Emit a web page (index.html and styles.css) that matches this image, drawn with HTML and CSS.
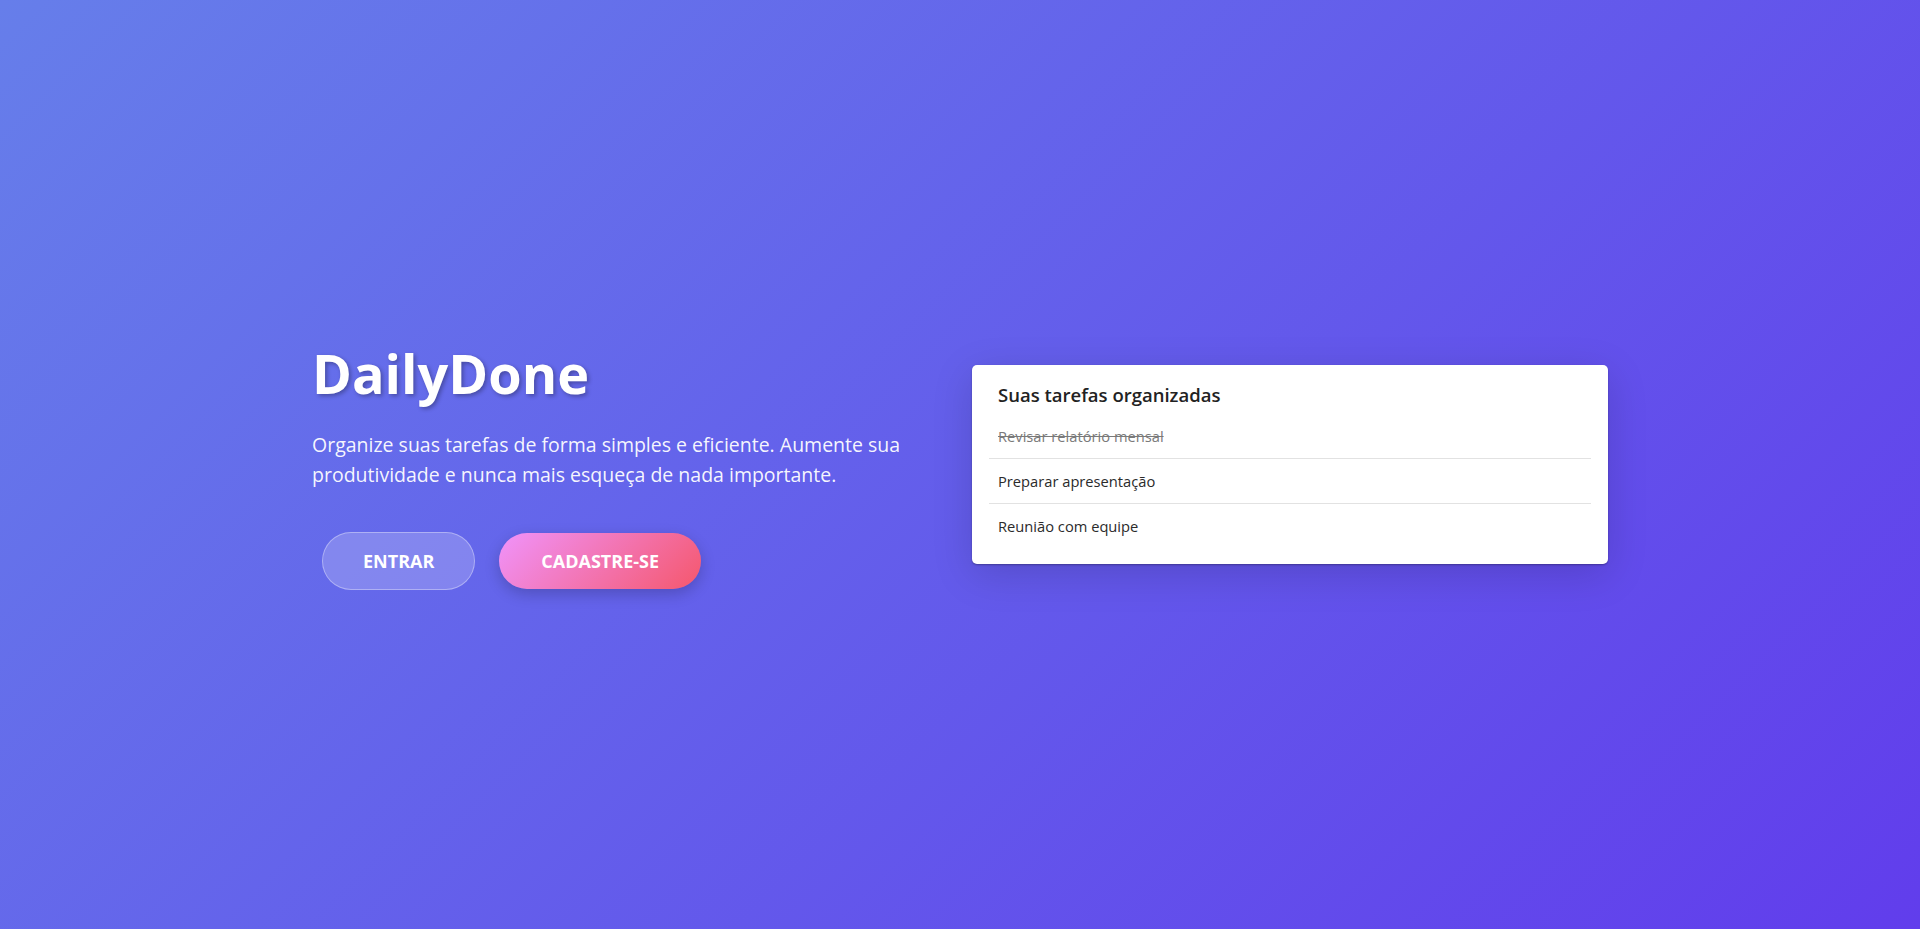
FILE: index.html
```html
<!DOCTYPE html>
<html lang="pt-BR">
<head>
<meta charset="utf-8">
<title>DailyDone</title>
<link rel="stylesheet" href="styles.css">
</head>
<body>
<section class="hero">
  <div class="container">
    <div class="intro">
      <h1 class="brand">DailyDone</h1>
      <p class="lead">Organize suas tarefas de forma simples e eficiente. Aumente sua produtividade e nunca mais esqueça de nada importante.</p>
      <div class="actions">
        <a class="btn btn-ghost" href="#">ENTRAR</a>
        <a class="btn btn-primary" href="#">CADASTRE-SE</a>
      </div>
    </div>
    <div class="preview">
      <div class="card">
        <h3 class="card-title">Suas tarefas organizadas</h3>
        <ul class="tasks">
          <li class="task done">Revisar relatório mensal</li>
          <li class="task">Preparar apresentação</li>
          <li class="task">Reunião com equipe</li>
        </ul>
      </div>
    </div>
  </div>
</section>
</body>
</html>
```

FILE: styles.css
```css
* { box-sizing: border-box; }

html, body {
  margin: 0;
  padding: 0;
}

body {
  font-family: "Open Sans", "Noto Sans", "Liberation Sans", sans-serif;
  color: #fff;
  background: linear-gradient(135deg, #667eea 0%, #613dec 100%);
  min-height: 100vh;
}

.hero {
  min-height: 100vh;
  display: flex;
  align-items: center;
  justify-content: center;
}

.container {
  width: 1296px;
  display: grid;
  grid-template-columns: 1fr 1fr;
  column-gap: 24px;
  align-items: center;
}

.intro {
  padding-top: 2px;
}

.brand {
  margin: 0 0 24px;
  font-size: 54px;
  line-height: 1.2;
  font-weight: 700;
  color: #fff;
  text-shadow: 2px 2px 4px rgba(0, 0, 0, 0.3);
}

.lead {
  margin: 0 0 42px;
  max-width: 600px;
  font-size: 19.5px;
  line-height: 30px;
  color: rgba(255, 255, 255, 0.95);
}

.actions {
  display: flex;
  align-items: center;
  gap: 24px;
  padding-left: 10px;
}

.btn {
  display: inline-block;
  padding: 15px 40px;
  border-radius: 50px;
  font-size: 18px;
  line-height: 26px;
  font-weight: 700;
  letter-spacing: 0;
  color: #fff;
  text-decoration: none;
}

.btn-ghost {
  background: rgba(255, 255, 255, 0.2);
  border: 1px solid rgba(255, 255, 255, 0.35);
}

.btn-primary {
  padding: 15px 42px;
  background: linear-gradient(135deg, #f093fb 0%, #f5576c 100%);
  box-shadow: 0 5px 15px rgba(0, 0, 0, 0.2);
}

.card {
  width: 100%;
  background: #fff;
  border-radius: 5px;
  padding: 17px 17px 16px;
  color: #212529;
  box-shadow: 0 1px 2px rgba(0, 0, 0, 0.3), 0 10px 40px rgba(0, 0, 0, 0.15);
}

.card-title {
  margin: 0 0 6px;
  padding: 0 9px;
  font-size: 18.5px;
  line-height: 26px;
  font-weight: 600;
  color: #222;
}

.tasks {
  list-style: none;
  margin: 0;
  padding: 0;
}

.task {
  padding: 12px 9px;
  font-size: 14.7px;
  line-height: 20px;
  color: #2b2b2b;
  border-bottom: 1px solid #e2e2e2;
}

.task:last-child {
  border-bottom: none;
}

.task.done {
  color: #7a7a7a;
  text-decoration: line-through;
}
```
